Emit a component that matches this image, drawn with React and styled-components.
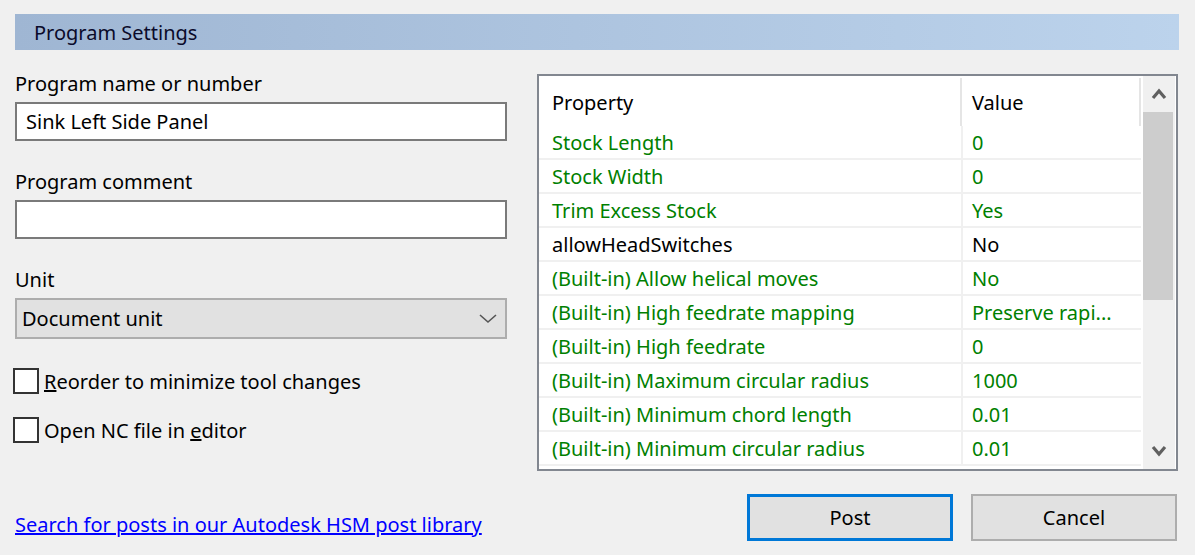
import React from 'react';
import styled, { createGlobalStyle } from 'styled-components';

const GlobalStyle = createGlobalStyle`
  html, body {
    margin: 0;
    padding: 0;
    background: #f0f0f0;
  }
  body {
    font-family: "Noto Sans", "Open Sans", sans-serif;
    font-size: 20px;
    color: #000;
  }
`;

const Page = styled.div`
  width: 1195px;
  height: 555px;
  box-sizing: border-box;
  padding: 14px 16px 0 15px;
  display: flex;
  flex-direction: column;
`;

const Banner = styled.div`
  height: 36px;
  display: flex;
  align-items: center;
  padding-left: 19px;
  background: linear-gradient(to right, #9fb6d3, #bcd3ec);
  color: #0a0a2a;
`;

const Main = styled.div`
  margin-top: 24px;
  display: grid;
  grid-template-columns: 492px 641px;
  column-gap: 30px;
`;

const LeftCol = styled.div`
  display: flex;
  flex-direction: column;
`;

const Field = styled.div`
  display: flex;
  flex-direction: column;
  margin-bottom: ${(p) => p.$gap || 31}px;
`;

const Label = styled.div`
  height: 20px;
  line-height: 20px;
  margin-bottom: 8px;
`;

const TextBox = styled.div`
  height: 39px;
  box-sizing: border-box;
  border: 2px solid #7a7a7a;
  background: #fff;
  padding-left: 9px;
  display: flex;
  align-items: center;
`;

const Select = styled.div`
  height: 41px;
  box-sizing: border-box;
  border: 2px solid #adadad;
  background: #e1e1e1;
  padding: 0 8px 0 5px;
  display: flex;
  align-items: center;
  justify-content: space-between;
`;

const CheckRow = styled.div`
  height: 26px;
  display: flex;
  align-items: center;
  margin-left: -2px;
  margin-bottom: ${(p) => p.$gap || 0}px;
`;

const Box = styled.div`
  width: 26px;
  height: 26px;
  box-sizing: border-box;
  border: 2px solid #333;
  background: #fff;
  margin-right: 5px;
`;

const Key = styled.span`
  text-decoration: underline;
`;

const Grid = styled.div`
  height: 397px;
  box-sizing: border-box;
  border: 2px solid #828790;
  background: #fff;
  display: flex;
  overflow: hidden;
`;

const Table = styled.div`
  width: 602px;
  display: flex;
  flex-direction: column;
`;

const HeadRow = styled.div`
  height: 50px;
  display: flex;
`;

const HeadCell = styled.div`
  width: ${(p) => p.$w}px;
  box-sizing: border-box;
  padding-left: ${(p) => p.$pad}px;
  display: flex;
  align-items: center;
  border-right: 2px solid #e5e5e5;
  margin: 2px 0 0;
`;

const Row = styled.div`
  height: 34px;
  box-sizing: border-box;
  display: flex;
  border-bottom: 2px solid #f0f0f0;
  color: ${(p) => (p.$plain ? '#000' : '#008000')};
`;

const Cell = styled.div`
  width: ${(p) => p.$w}px;
  box-sizing: border-box;
  padding-left: ${(p) => p.$pad}px;
  display: flex;
  align-items: center;
  white-space: nowrap;
  border-right: ${(p) => (p.$line ? '2px solid #f0f0f0' : 'none')};
`;

const ScrollBar = styled.div`
  width: 32px;
  margin-left: 2px;
  background: #f0f0f0;
  display: flex;
  flex-direction: column;
`;

const Arrow = styled.div`
  height: 36px;
  display: flex;
  align-items: center;
  justify-content: center;
`;

const Thumb = styled.div`
  height: 188px;
  margin-right: 2px;
  background: #cdcdcd;
`;

const Track = styled.div`
  flex: 1;
`;

const Footer = styled.div`
  margin-top: 23px;
  display: flex;
  align-items: center;
  justify-content: space-between;
`;

const Link = styled.a`
  color: #0000ff;
  text-decoration: underline;
  margin-top: 13px;
  cursor: pointer;
`;

const Buttons = styled.div`
  display: flex;
  gap: 18px;
  margin-right: 2px;
`;

const Button = styled.div`
  width: 206px;
  height: 47px;
  box-sizing: border-box;
  border: ${(p) => (p.$primary ? '3px solid #0078d7' : '2px solid #adadad')};
  background: #e1e1e1;
  display: flex;
  align-items: center;
  justify-content: center;
`;

const rows = [
  ['Stock Length', '0'],
  ['Stock Width', '0'],
  ['Trim Excess Stock', 'Yes'],
  ['allowHeadSwitches', 'No', true],
  ['(Built-in) Allow helical moves', 'No'],
  ['(Built-in) High feedrate mapping', 'Preserve rapi...'],
  ['(Built-in) High feedrate', '0'],
  ['(Built-in) Maximum circular radius', '1000'],
  ['(Built-in) Minimum chord length', '0.01'],
  ['(Built-in) Minimum circular radius', '0.01'],
];

const Chevron = ({ up }) => (
  <svg width="16" height="12" viewBox="0 0 16 12">
    <polyline
      points={up ? '2,10 8,3 14,10' : '2,2 8,9 14,2'}
      fill="none"
      stroke="#606060"
      strokeWidth="3.2"
    />
  </svg>
);

export default function App() {
  return (
    <>
      <GlobalStyle />
      <Page>
        <Banner>Program Settings</Banner>
        <Main>
          <LeftCol>
            <Field>
              <Label>Program name or number</Label>
              <TextBox>Sink Left Side Panel</TextBox>
            </Field>
            <Field>
              <Label>Program comment</Label>
              <TextBox />
            </Field>
            <Field $gap={29}>
              <Label>Unit</Label>
              <Select>
                Document unit
                <svg width="18" height="10" viewBox="0 0 18 10">
                  <polyline points="1,1 9,8 17,1" fill="none" stroke="#555" strokeWidth="1.6" />
                </svg>
              </Select>
            </Field>
            <CheckRow $gap={23}>
              <Box />
              <span><Key>R</Key>eorder to minimize tool changes</span>
            </CheckRow>
            <CheckRow>
              <Box />
              <span>Open NC file in <Key>e</Key>ditor</span>
            </CheckRow>
          </LeftCol>
          <Grid>
            <Table>
              <HeadRow>
                <HeadCell $w={423} $pad={13}>Property</HeadCell>
                <HeadCell $w={179} $pad={10}>Value</HeadCell>
              </HeadRow>
              {rows.map(([name, value, plain]) => (
                <Row key={name} $plain={plain}>
                  <Cell $w={424} $pad={13} $line>{name}</Cell>
                  <Cell $w={178} $pad={9}>{value}</Cell>
                </Row>
              ))}
            </Table>
            <ScrollBar>
              <Arrow><Chevron up /></Arrow>
              <Thumb />
              <Track />
              <Arrow><Chevron /></Arrow>
            </ScrollBar>
          </Grid>
        </Main>
        <Footer>
          <Link>Search for posts in our Autodesk HSM post library</Link>
          <Buttons>
            <Button $primary>Post</Button>
            <Button>Cancel</Button>
          </Buttons>
        </Footer>
      </Page>
    </>
  );
}
